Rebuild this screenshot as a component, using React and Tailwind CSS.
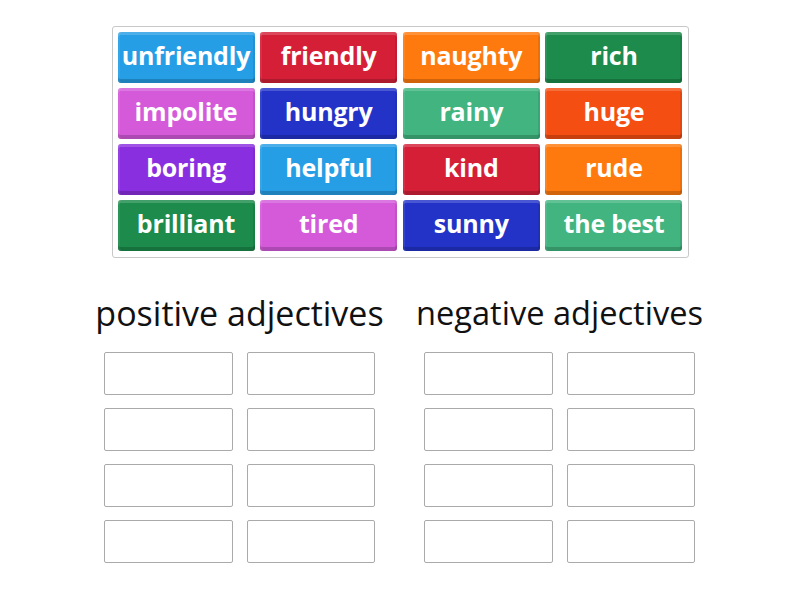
const tiles = [
    { text: 'unfriendly', c: 'bg-[#259ee6]' },
    { text: 'friendly', c: 'bg-[#d41f37]' },
    { text: 'naughty', c: 'bg-[#ff7a0e]' },
    { text: 'rich', c: 'bg-[#1c8b4b]' },
    { text: 'impolite', c: 'bg-[#d45ad9]' },
    { text: 'hungry', c: 'bg-[#2333c8]' },
    { text: 'rainy', c: 'bg-[#41b47f]' },
    { text: 'huge', c: 'bg-[#f54e12]' },
    { text: 'boring', c: 'bg-[#8a2fe0]' },
    { text: 'helpful', c: 'bg-[#259ee6]' },
    { text: 'kind', c: 'bg-[#d41f37]' },
    { text: 'rude', c: 'bg-[#ff7a0e]' },
    { text: 'brilliant', c: 'bg-[#1c8b4b]' },
    { text: 'tired', c: 'bg-[#d45ad9]' },
    { text: 'sunny', c: 'bg-[#2333c8]' },
    { text: 'the best', c: 'bg-[#41b47f]' },
];

function Tile({ text, c }) {
    return (
        <div
            className={`${c} h-[51px] rounded-[3px] flex items-center justify-center text-white font-bold text-[25px] leading-none pb-[5px] tracking-[-0.2px] shadow-[inset_0_3px_0_rgba(255,255,255,0.18),inset_0_-4px_0_rgba(0,0,0,0.18),inset_2px_0_0_rgba(255,255,255,0.08),inset_-2px_0_0_rgba(0,0,0,0.08)]`}
        >
            {text}
        </div>
    );
}

function Group({ title, size }) {
    return (
        <div className="flex flex-col items-center w-[271px]">
            <h2 className={`${size} leading-[46px] text-[#111] whitespace-nowrap h-[46px]`}>{title}</h2>
            <div className="grid grid-cols-[129px_128px] gap-x-[14px] gap-y-[13px] mt-[16px]">
                {Array.from({ length: 8 }).map((_, i) => (
                    <div key={i} className="h-[43px] border border-[#aaa] rounded-[2px] bg-white" />
                ))}
            </div>
        </div>
    );
}

export default function App() {
    return (
        <div className="w-[800px] h-[600px] bg-white flex flex-col items-center font-['Open_Sans',sans-serif]">
            <div className="mt-[26px] w-[577px] border border-[#c8c8c8] rounded-[3px] pt-[5px] pb-[6px] px-[5px] grid grid-cols-[repeat(4,137px)] gap-x-[5.67px] gap-y-[5px]">
                {tiles.map((t) => (
                    <Tile key={t.text} {...t} />
                ))}
            </div>
            <div className="flex gap-[49px] mt-[32px] ml-[-1px]">
                <Group title="positive adjectives" size="text-[34px]" />
                <Group title="negative adjectives" size="text-[32.6px]" />
            </div>
        </div>
    );
}
